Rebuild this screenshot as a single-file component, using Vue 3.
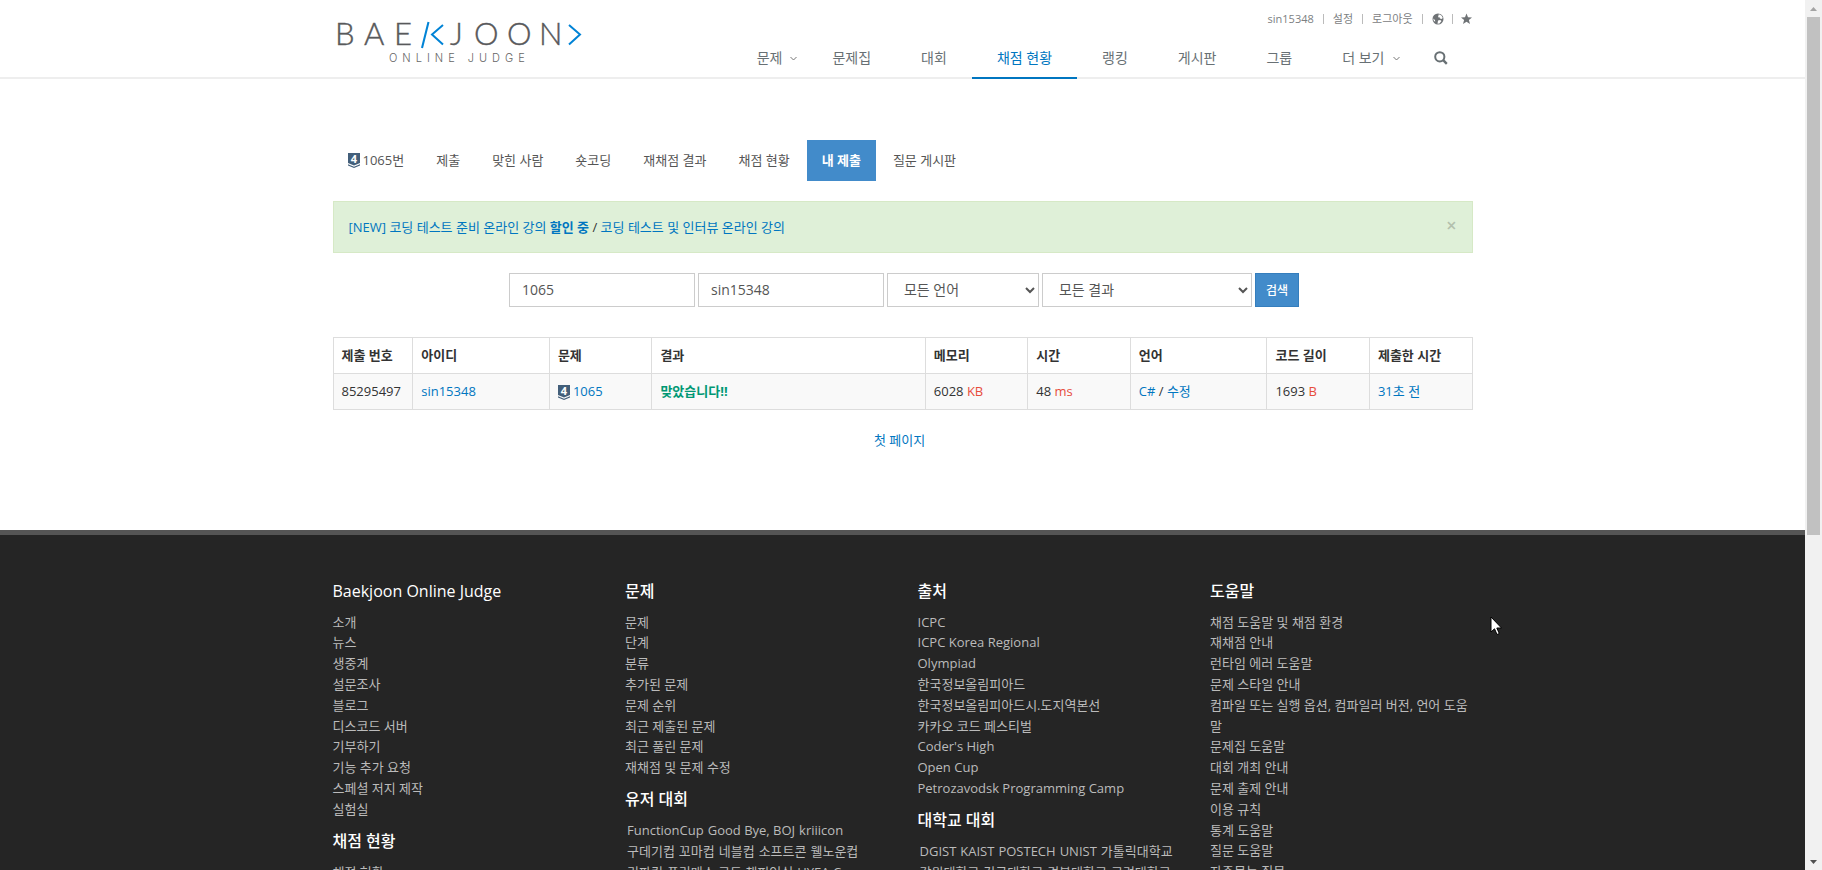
<script setup>
import { ref } from 'vue'

const logoLetters = [
  { char: 'B', x: 2 },
  { char: 'A', x: 31 },
  { char: 'E', x: 61 },
  { char: 'J', x: 117 },
  { char: 'O', x: 141 },
  { char: 'O', x: 174 },
  { char: 'N', x: 206 },
]

const navItems = [
  { label: '문제', caret: true },
  { label: '문제집' },
  { label: '대회' },
  { label: '채점 현황', active: true },
  { label: '랭킹' },
  { label: '게시판' },
  { label: '그룹' },
  { label: '더 보기', caret: true },
]

const tabs = [
  { label: '1065번', tier: true },
  { label: '제출' },
  { label: '맞힌 사람' },
  { label: '숏코딩' },
  { label: '재채점 결과' },
  { label: '채점 현황' },
  { label: '내 제출', active: true },
  { label: '질문 게시판' },
]

const problem = ref('1065')
const user = ref('sin15348')
const language = ref('all')
const result = ref('all')

const footer = [
  [
    {
      title: 'Baekjoon Online Judge',
      links: ['소개', '뉴스', '생중계', '설문조사', '블로그', '디스코드 서버', '기부하기', '기능 추가 요청', '스페셜 저지 제작', '실험실'],
    },
    { title: '채점 현황', links: ['채점 현황'] },
  ],
  [
    {
      title: '문제',
      links: ['문제', '단계', '분류', '추가된 문제', '문제 순위', '최근 제출된 문제', '최근 풀린 문제', '재채점 및 문제 수정'],
    },
    {
      title: '유저 대회',
      inline: true,
      links: ['FunctionCup', 'Good Bye, BOJ', 'kriiicon', '구데기컵', '꼬마컵', '네블컵', '소프트콘', '웰노운컵', '리파컵', '폴리매스 코드 챔피언십', 'HYEA Cup'],
    },
  ],
  [
    {
      title: '출처',
      links: ['ICPC', 'ICPC Korea Regional', 'Olympiad', '한국정보올림피아드', '한국정보올림피아드시.도지역본선', '카카오 코드 페스티벌', "Coder's High", 'Open Cup', 'Petrozavodsk Programming Camp'],
    },
    {
      title: '대학교 대회',
      inline: true,
      links: ['DGIST', 'KAIST', 'POSTECH', 'UNIST', '가톨릭대학교', '강원대학교', '건국대학교', '경북대학교', '고려대학교'],
    },
  ],
  [
    {
      title: '도움말',
      links: ['채점 도움말 및 채점 환경', '재채점 안내', '런타임 에러 도움말', '문제 스타일 안내', '컴파일 또는 실행 옵션, 컴파일러 버전, 언어 도움말', '문제집 도움말', '대회 개최 안내', '문제 출제 안내', '이용 규칙', '통계 도움말', '질문 도움말', '자주묻는 질문'],
    },
  ],
]
</script>

<template>
  <div class="viewport">
    <div class="page">
      <header class="header">
        <div class="container header-inner">
          <a class="logo" href="#" aria-label="BAEKJOON ONLINE JUDGE">
            <svg width="250" height="46" viewBox="0 0 250 46">
              <g class="logo-name">
                <text v-for="letter in logoLetters" :key="letter.x" :x="letter.x" y="27">{{ letter.char }}</text>
              </g>
              <g class="logo-marks">
                <path d="M95.5 4 L89 30" />
                <path d="M110 7 L99 16.500 L110 26.500" />
                <path d="M236 7 L247 16.500 L236 26.500" />
              </g>
              <text class="logo-sub" x="56" y="44">ONLINE JUDGE</text>
            </svg>
          </a>
          <div class="header-right">
            <ul class="topbar">
              <li><a href="#">sin15348</a></li>
              <li><a href="#">설정</a></li>
              <li><a href="#">로그아웃</a></li>
              <li class="icon">
                <a href="#" aria-label="언어">
                  <svg width="12" height="12" viewBox="0 0 12 12">
                    <circle cx="6" cy="6" r="5.500" fill="#6f7376" />
                    <path d="M6.800 1.300 L9.500 2.500 L10.800 5 L9.500 6 L8 5.500 L7.200 4 L6 4.500 L6.300 3 Z M6 7.500 L8.200 7 L9.500 8 L7.500 10.500 L5.500 10.800 Z M1.200 5.500 L3 7 L3.200 8.800 L1.800 7.800 Z" fill="#fff" />
                  </svg>
                </a>
              </li>
              <li class="icon">
                <a href="#" aria-label="즐겨찾기">
                  <svg width="11" height="12" viewBox="0 0 11 12">
                    <path d="M5.500 0.500 L7 4.300 L11 4.500 L7.900 7 L9 11 L5.500 8.800 L2 11 L3.100 7 L0 4.500 L4 4.300 Z" fill="#6f7376" />
                  </svg>
                </a>
              </li>
            </ul>
            <nav class="nav">
              <a
                v-for="item in navItems"
                :key="item.label"
                href="#"
                class="nav-link"
                :class="{ active: item.active, 'has-caret': item.caret }"
              >
                {{ item.label }}
                <svg v-if="item.caret" width="7" height="5" viewBox="0 0 7 5">
                  <path d="M0.500 1 L3.500 4 L6.500 1" fill="none" stroke="#777" />
                </svg>
              </a>
              <button class="search-toggle" type="button" aria-label="검색">
                <svg width="14" height="14" viewBox="0 0 14 14" fill="none" stroke="#687074">
                  <circle cx="5.800" cy="5.800" r="4.600" stroke-width="2" />
                  <path d="M9.200 9.200 L12.800 12.800" stroke-width="2.400" />
                </svg>
              </button>
            </nav>
          </div>
        </div>
      </header>

      <main class="container content">
        <ul class="tabs">
          <li v-for="tab in tabs" :key="tab.label">
            <a href="#" class="tab" :class="{ active: tab.active }">
              <svg v-if="tab.tier" class="tier" width="12" height="15" viewBox="0 0 12 15">
                <path d="M0 0 H12 V10 L6 12.500 L0 10 Z" fill="#435f7a" />
                <path d="M0 11.200 L6 13.700 L12 11.200 V12.400 L6 15 L0 12.400 Z" fill="#435f7a" />
                <text x="6" y="10" text-anchor="middle">4</text>
              </svg>{{ tab.label }}
            </a>
          </li>
        </ul>

        <div class="alert">
          <p>
            <a href="#">[NEW] 코딩 테스트 준비 온라인 강의 <b>할인 중</b></a> /
            <a href="#">코딩 테스트 및 인터뷰 온라인 강의</a>
          </p>
          <button class="close" type="button" aria-label="닫기">×</button>
        </div>

        <form class="filters" @submit.prevent>
          <input v-model="problem" class="control text" type="text" aria-label="문제" />
          <input v-model="user" class="control text" type="text" aria-label="아이디" />
          <select v-model="language" class="control language" aria-label="언어">
            <option value="all">모든 언어</option>
          </select>
          <select v-model="result" class="control result" aria-label="결과">
            <option value="all">모든 결과</option>
          </select>
          <button class="submit" type="submit">검색</button>
        </form>

        <table class="status">
          <colgroup>
            <col class="w7" /><col class="w12" /><col class="w9" /><col class="w24" /><col class="w9" />
            <col class="w9" /><col class="w12" /><col class="w9" /><col class="w9" />
          </colgroup>
          <thead>
            <tr>
              <th>제출 번호</th>
              <th>아이디</th>
              <th>문제</th>
              <th>결과</th>
              <th>메모리</th>
              <th>시간</th>
              <th>언어</th>
              <th>코드 길이</th>
              <th>제출한 시간</th>
            </tr>
          </thead>
          <tbody>
            <tr>
              <td>85295497</td>
              <td><a href="#">sin15348</a></td>
              <td>
                <svg class="tier" width="12" height="15" viewBox="0 0 12 15">
                  <path d="M0 0 H12 V10 L6 12.500 L0 10 Z" fill="#435f7a" />
                  <path d="M0 11.200 L6 13.700 L12 11.200 V12.400 L6 15 L0 12.400 Z" fill="#435f7a" />
                  <text x="6" y="10" text-anchor="middle">4</text>
                </svg><a href="#">1065</a>
              </td>
              <td><span class="accepted">맞았습니다!!</span></td>
              <td>6028 <span class="unit">KB</span></td>
              <td>48 <span class="unit">ms</span></td>
              <td><a href="#">C#</a> / <a href="#">수정</a></td>
              <td>1693 <span class="unit">B</span></td>
              <td><a href="#">31초 전</a></td>
            </tr>
          </tbody>
        </table>

        <div class="pager"><a href="#">첫 페이지</a></div>
      </main>

      <footer class="footer">
        <div class="container footer-grid">
          <div v-for="(column, i) in footer" :key="i">
            <section v-for="group in column" :key="group.title">
              <h2>{{ group.title }}</h2>
              <ul :class="{ 'inline-links': group.inline }">
                <li v-for="link in group.links" :key="link"><a href="#">{{ link }}</a></li>
              </ul>
            </section>
          </div>
        </div>
      </footer>
    </div>

    <div class="scrollbar" aria-hidden="true">
      <svg width="17" height="17" viewBox="0 0 17 17"><path d="M5 11 L8.500 7 L12 11 Z" fill="#a3a3a3" /></svg>
      <div class="track"><div class="thumb"></div></div>
      <svg width="17" height="17" viewBox="0 0 17 17"><path d="M5 7 L8.500 11 L12 7 Z" fill="#505050" /></svg>
    </div>

    <svg class="cursor" width="13" height="20" viewBox="0 0 13 20" aria-hidden="true">
      <path d="M1 1 V16 L4.500 12.800 L7 18.500 L9.300 17.500 L6.800 12 H11.500 Z" fill="#fff" stroke="#000" />
    </svg>
  </div>
</template>

<style>
body {
  margin: 0;
  overflow: hidden;
}
</style>

<style scoped>
* {
  box-sizing: border-box;
}
.viewport {
  display: flex;
  height: 100vh;
  overflow: hidden;
  background: #fff;
  color: #333;
  font-family: 'Open Sans', 'Noto Sans CJK KR', sans-serif;
  font-size: 13px;
  line-height: 1.6;
}
.page {
  flex: 1;
  min-width: 0;
  overflow: hidden;
}
.container {
  max-width: 1170px;
  margin: 0 auto;
  padding: 0 15px;
}
a {
  color: #0076c0;
  text-decoration: none;
}
ul {
  margin: 0;
  padding: 0;
  list-style: none;
}
button {
  font-family: inherit;
}
svg {
  display: block;
  overflow: visible;
}

.header {
  border-bottom: 2px solid #eee;
}
.header-inner {
  display: flex;
  justify-content: space-between;
}
.logo {
  padding-top: 18px;
}
.logo-name {
  font-family: Lato, sans-serif;
  font-size: 31px;
  font-weight: 300;
  fill: #58595b;
  stroke: #58595b;
  stroke-width: 0.4;
}
.logo-sub {
  font-family: Inter, sans-serif;
  font-size: 11px;
  font-weight: 300;
  letter-spacing: 5px;
  fill: #666;
}
.logo-marks {
  fill: none;
  stroke: #0083d6;
  stroke-width: 2;
}
.header-right {
  display: flex;
  flex-direction: column;
  align-items: flex-end;
}
.topbar {
  display: flex;
  align-items: center;
  height: 18px;
  margin-top: 10px;
  padding-right: 1px;
  font-size: 11px;
}
.topbar li {
  display: flex;
  align-items: center;
}
.topbar li + li::before {
  content: '';
  width: 1px;
  height: 10px;
  margin: 0 9px;
  background: #bbb;
}
.topbar .icon + .icon::before {
  margin: 0 8px;
}
.topbar a {
  color: #7c8082;
}
.nav {
  display: flex;
  margin: 9px 0 -2px;
}
.nav-link {
  display: flex;
  align-items: center;
  height: 42px;
  padding: 2px 25px 0;
  border-bottom: 2px solid transparent;
  color: #687074;
  font-size: 14px;
}
.nav-link.active {
  border-color: #0076c0;
  color: #0076c0;
}
.nav-link.has-caret {
  gap: 8px;
  padding-right: 10px;
}
.search-toggle {
  height: 42px;
  padding: 0 25px 0 24px;
  border: 0;
  background: none;
}

.content {
  padding-top: 61px;
  padding-bottom: 79px;
}
.tabs {
  display: flex;
  gap: 2px;
}
.tab {
  display: flex;
  align-items: center;
  gap: 3px;
  padding: 10px 15px;
  color: #555;
}
.tab.active {
  background: #428bca;
  color: #fff;
  font-weight: 700;
}
.tier text {
  fill: #fff;
  font-size: 11px;
  font-weight: 700;
}
.alert {
  display: flex;
  justify-content: space-between;
  margin-top: 20px;
  padding: 15px;
  border: 1px solid #d6e9c6;
  background: #dff0d8;
  line-height: 20px;
}
.alert p {
  margin: 0;
}
.close {
  padding: 0;
  border: 0;
  background: none;
  color: #b3c0ad;
  font-size: 18px;
  font-weight: 600;
  line-height: 16px;
  align-self: flex-start;
}
.filters {
  display: flex;
  justify-content: center;
  gap: 3px;
  margin-top: 20px;
  padding-left: 3px;
}
.control {
  height: 34px;
  padding: 0 12px;
  border: 1px solid #ccc;
  border-radius: 0;
  background: #fff;
  color: #555;
  font-family: inherit;
  font-size: 14px;
}
.control.text {
  width: 186px;
}
.control.language {
  width: 152px;
}
.control.result {
  width: 210px;
}
.submit {
  height: 34px;
  padding: 0 10px;
  border: 1px solid #357ebd;
  background: #428bca;
  color: #fff;
  font-size: 12px;
  font-weight: 500;
}
.status {
  width: 100%;
  margin-top: 30px;
  border-collapse: collapse;
  table-layout: fixed;
  line-height: 19px;
}
.w7 {
  width: 7%;
}
.w9 {
  width: 9%;
}
.w12 {
  width: 12%;
}
.w24 {
  width: 24%;
}
.status th,
.status td {
  padding: 8px;
  border: 1px solid #ddd;
  text-align: left;
  white-space: nowrap;
}
.status tbody tr {
  background: #f9f9f9;
}
.status .tier {
  display: inline-block;
  margin-right: 3px;
  vertical-align: middle;
}
.accepted {
  color: #009874;
  font-weight: 700;
}
.unit {
  color: #e74c3c;
}
.pager {
  margin-top: 20px;
  padding-right: 6px;
  text-align: center;
}

.footer {
  border-top: 5px solid #555;
  background: #252525;
}
.footer-grid {
  display: grid;
  grid-template-columns: repeat(4, minmax(0, 1fr));
  gap: 30px;
  padding-top: 35px;
}
.footer h2 {
  margin: 10px 0;
  color: #fff;
  font-size: 16px;
  font-weight: 500;
  line-height: 22px;
}
.footer a {
  color: #bbb;
}
.inline-links {
  display: flex;
  flex-wrap: wrap;
  column-gap: 4px;
  padding-left: 2px;
}

.scrollbar {
  display: flex;
  flex-direction: column;
  width: 17px;
  background: #f1f1f1;
}
.track {
  flex: 1;
  padding: 0 2px;
}
.thumb {
  height: 62%;
  background: #c1c1c1;
}
.cursor {
  position: absolute;
  top: 616px;
  left: 1490px;
}
</style>
